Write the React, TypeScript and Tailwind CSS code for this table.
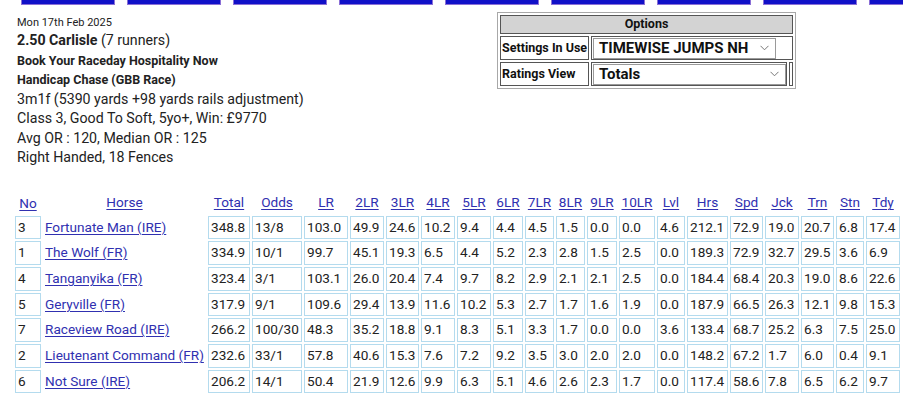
import React from 'react';

type Runner = {
  no: number;
  horse: string;
  total: string;
  odds: string;
  vals: string[];
};

const headers = ['LR', '2LR', '3LR', '4LR', '5LR', '6LR', '7LR', '8LR', '9LR', '10LR', 'Lvl', 'Hrs', 'Spd', 'Jck', 'Trn', 'Stn', 'Tdy'];
const widths = ['w-[44px]', 'w-[34px]', 'w-[33px]', 'w-[34px]', 'w-[34px]', 'w-[30px]', 'w-[29px]', 'w-[29px]', 'w-[30px]', 'w-[36px]', 'w-[28px]', 'w-[41px]', 'w-[33px]', 'w-[34px]', 'w-[33px]', 'w-[28px]', 'w-[34px]'];

const runners: Runner[] = [
  { no: 3, horse: 'Fortunate Man (IRE)', total: '348.8', odds: '13/8', vals: ['103.0', '49.9', '24.6', '10.2', '9.4', '4.4', '4.5', '1.5', '0.0', '0.0', '4.6', '212.1', '72.9', '19.0', '20.7', '6.8', '17.4'] },
  { no: 1, horse: 'The Wolf (FR)', total: '334.9', odds: '10/1', vals: ['99.7', '45.1', '19.3', '6.5', '4.4', '5.2', '2.3', '2.8', '1.5', '2.5', '0.0', '189.3', '72.9', '32.7', '29.5', '3.6', '6.9'] },
  { no: 4, horse: 'Tanganyika (FR)', total: '323.4', odds: '3/1', vals: ['103.1', '26.0', '20.4', '7.4', '9.7', '8.2', '2.9', '2.1', '2.1', '2.5', '0.0', '184.4', '68.4', '20.3', '19.0', '8.6', '22.6'] },
  { no: 5, horse: 'Geryville (FR)', total: '317.9', odds: '9/1', vals: ['109.6', '29.4', '13.9', '11.6', '10.2', '5.3', '2.7', '1.7', '1.6', '1.9', '0.0', '187.9', '66.5', '26.3', '12.1', '9.8', '15.3'] },
  { no: 7, horse: 'Raceview Road (IRE)', total: '266.2', odds: '100/30', vals: ['48.3', '35.2', '18.8', '9.1', '8.3', '5.1', '3.3', '1.7', '0.0', '0.0', '3.6', '133.4', '68.7', '25.2', '6.3', '7.5', '25.0'] },
  { no: 2, horse: 'Lieutenant Command (FR)', total: '232.6', odds: '33/1', vals: ['57.8', '40.6', '15.3', '7.6', '7.2', '9.2', '3.5', '3.0', '2.0', '2.0', '0.0', '148.2', '67.2', '1.7', '6.0', '0.4', '9.1'] },
  { no: 6, horse: 'Not Sure (IRE)', total: '206.2', odds: '14/1', vals: ['50.4', '21.9', '12.6', '9.9', '6.3', '5.1', '4.6', '2.6', '2.3', '1.7', '0.0', '117.4', '58.6', '7.8', '6.5', '6.2', '9.7'] },
];

const Chevron = () => (
  <svg width="9" height="6" viewBox="0 0 9 6" className="shrink-0">
    <path d="M0.5 0.8 L4.5 4.8 L8.5 0.8" fill="none" stroke="#777" strokeWidth="1" />
  </svg>
);

const FakeSelect = ({ label, wide }: { label: string; wide?: boolean }) => (
  <div className={`flex h-[21px] items-center justify-between border border-[#9a9a9a] pl-[5px] pr-[6px] text-[15px] font-bold leading-none text-[#111] ${wide ? 'w-[193px]' : 'w-[183px]'}`}>
    <span>{label}</span>
    <Chevron />
  </div>
);

const link = 'text-[#3030b0] underline underline-offset-2 decoration-1';
const cell = 'border border-[#b4dbee] px-[2px] py-[3px] leading-[15.7px] whitespace-nowrap overflow-hidden';

export default function App() {
  return (
    <div className="min-h-[414px] w-[903px] overflow-hidden bg-white text-[#222] [font-family:Roboto,'Liberation_Sans',sans-serif]">
      {/* nav buttons, scrolled off */}
      <div className="ml-[21px] flex gap-[12px]">
        {Array.from({ length: 9 }).map((_, i) => (
          <div key={i} className="h-[5px] w-[94px] shrink-0 border-x border-b border-[#8a6fd6] bg-[#1010c8]" />
        ))}
      </div>

      <div className="flex">
        {/* race info */}
        <div className="ml-[17px] w-[480px] pt-[10px]">
          <div className="text-[11px] leading-[16px]">Mon 17th Feb 2025</div>
          <div className="text-[14.2px] leading-[19.5px]">
            <span className="font-bold">2.50 Carlisle</span> (7 runners)
          </div>
          <div className="text-[12.5px] font-bold leading-[19.5px]">Book Your Raceday Hospitality Now</div>
          <div className="text-[12.5px] font-bold leading-[19.5px]">Handicap Chase (GBB Race)</div>
          <div className="text-[14.2px] leading-[19.5px]">3m1f (5390 yards +98 yards rails adjustment)</div>
          <div className="text-[14.2px] leading-[19.5px]">Class 3, Good To Soft, 5yo+, Win: £9770</div>
          <div className="text-[14.2px] leading-[19.5px]">Avg OR : 120, Median OR : 125</div>
          <div className="text-[14.2px] leading-[19.5px]">Right Handed, 18 Fences</div>
        </div>

        {/* options */}
        <div className="mt-[7px]">
          <table className="border-separate border-spacing-[2px] border border-[#a8a8a8] text-[12.5px] text-[#111]">
            <tbody>
              <tr>
                <th colSpan={3} className="h-[19px] border border-[#555] bg-[#d3d3d3] text-center font-bold leading-none">
                  Options
                </th>
              </tr>
              <tr>
                <td className="h-[24px] w-[89px] whitespace-nowrap border border-[#555] pl-[1px] font-bold leading-none">Settings In Use</td>
                <td colSpan={2} className="w-[200px] border border-[#555] pl-[1px]">
                  <FakeSelect label="TIMEWISE JUMPS NH" />
                </td>
              </tr>
              <tr>
                <td className="h-[24px] border border-[#555] pl-[1px] font-bold leading-none">Ratings View</td>
                <td className="border border-[#555] pl-[1px]">
                  <FakeSelect label="Totals" wide />
                </td>
                <td className="w-[4px] border border-[#555]" />
              </tr>
            </tbody>
          </table>
        </div>
      </div>

      {/* ratings table */}
      <table className="mt-[22px] ml-[13px] w-[889px] table-fixed border-separate border-spacing-[2px] text-[13.6px]">
        <thead>
          <tr>
            <th className="h-[22px] w-[26px] p-0 text-center font-normal leading-[16px]"><span className={link}>No</span></th>
            <th className="w-[163px] p-0 text-center font-normal"><span className={link}>Horse</span></th>
            <th className="w-[42px] p-0 text-center font-normal"><span className={link}>Total</span></th>
            <th className="w-[50px] p-0 text-center font-normal"><span className={link}>Odds</span></th>
            {headers.map((h, i) => (
              <th key={h} className={`${widths[i]} p-0 text-center font-normal`}>
                <span className={link}>{h}</span>
              </th>
            ))}
          </tr>
        </thead>
        <tbody>
          {runners.map((r) => (
            <tr key={r.no}>
              <td className={cell}>{r.no}</td>
              <td className="overflow-hidden whitespace-nowrap px-[2px] py-[3px] leading-[15.7px]"><span className={link}>{r.horse}</span></td>
              <td className={cell}>{r.total}</td>
              <td className={cell}>{r.odds}</td>
              {r.vals.map((v, i) => (
                <td key={i} className={cell}>{v}</td>
              ))}
            </tr>
          ))}
        </tbody>
      </table>
    </div>
  );
}
